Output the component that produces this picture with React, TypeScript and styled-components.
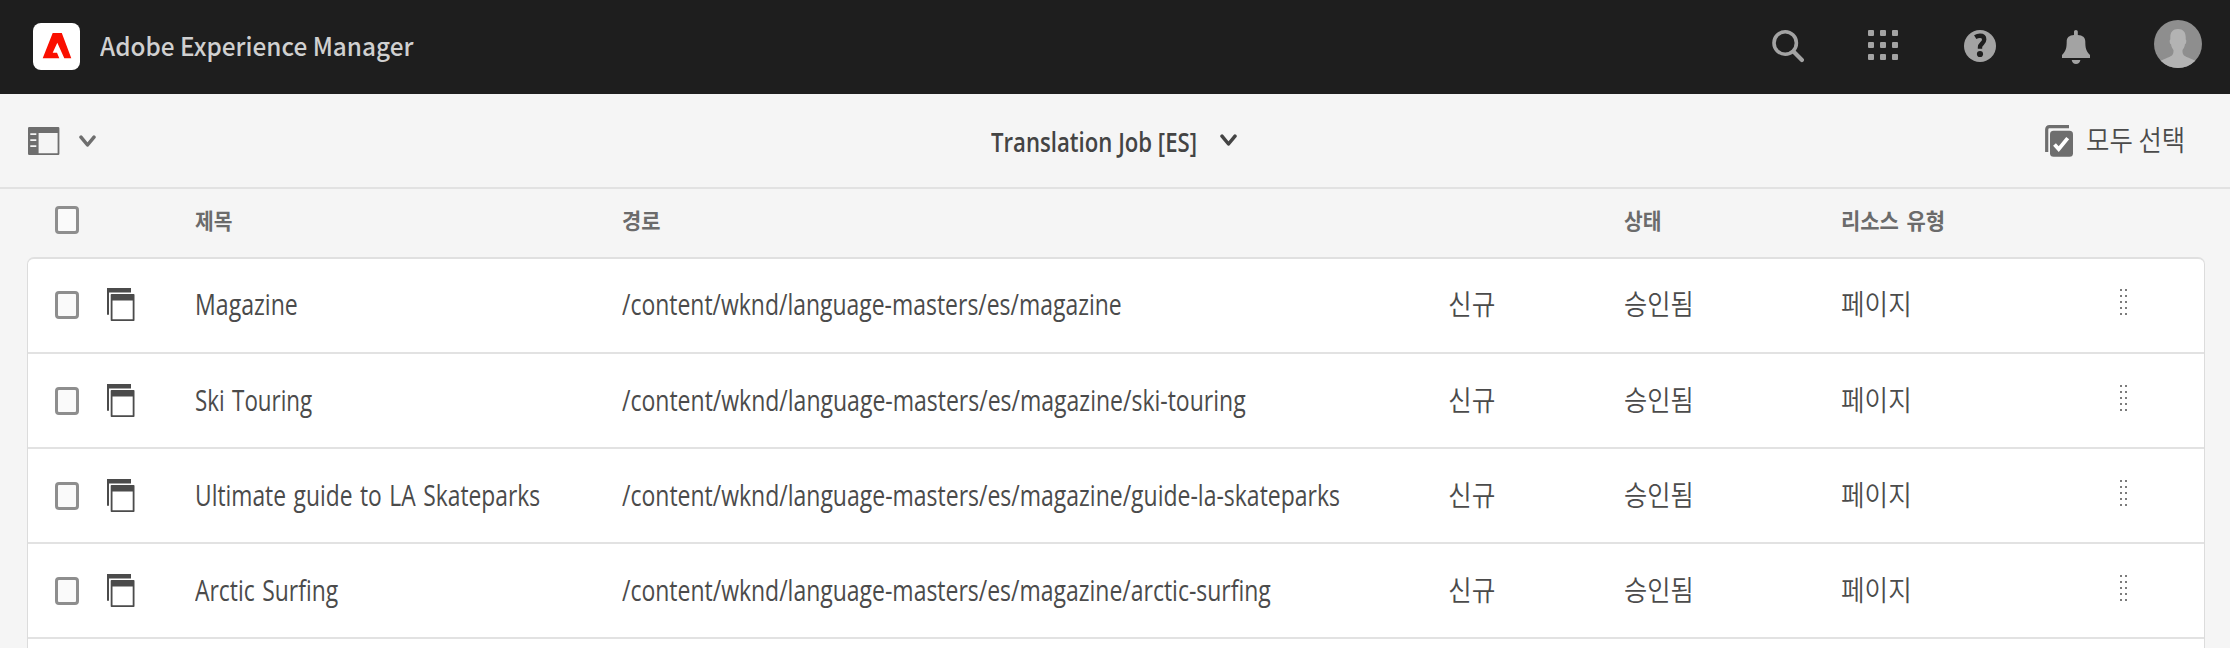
import React, { useLayoutEffect, useRef, useState } from "react";
import styled, { createGlobalStyle } from "styled-components";

const GlobalStyle = createGlobalStyle`
  * { box-sizing: border-box; }
  body { margin: 0; background: #f5f5f5; overflow: hidden; }
`;

const LATIN = `"Open Sans", "Noto Sans CJK KR", sans-serif`;
const KOREAN = `"Noto Sans CJK KR", "Noto Sans", sans-serif`;

const Page = styled.div`
  height: 648px;
  overflow: hidden;
  background: #f5f5f5;
  font-family: ${LATIN};
  color: #4b4b4b;
`;

/* Condensed text: the line is squeezed horizontally to a fixed measure. */
const Measure = styled.span<{ $width: number }>`
  display: block;
  flex: none;
  width: ${(p) => p.$width}px;
  white-space: nowrap;
`;

const Glyphs = styled.span`
  display: inline-block;
  transform-origin: 0 50%;
`;

function Condensed({ width, children }: { width: number; children: string }) {
  const ref = useRef<HTMLSpanElement>(null);
  const [scale, setScale] = useState(1);
  useLayoutEffect(() => {
    if (ref.current) setScale(width / ref.current.offsetWidth);
  }, [width, children]);
  return (
    <Measure $width={width}>
      <Glyphs ref={ref} style={{ transform: `scaleX(${scale})` }}>
        {children}
      </Glyphs>
    </Measure>
  );
}

const Shell = styled.header`
  display: flex;
  align-items: center;
  height: 94px;
  padding: 0 28px 0 33px;
  background: #1e1e1e;
`;

const Logo = styled.svg`
  width: 47px;
  height: 47px;
  margin-bottom: 1px;
`;

const Product = styled.div`
  margin-left: 20px;
  padding-bottom: 5px;
  font-family: "Noto Sans CJK KR", sans-serif;
  font-size: 25.5px;
  font-weight: 500;
  line-height: 40px;
  color: #d0d0d0;
`;

const ShellActions = styled.nav`
  display: flex;
  align-items: center;
  gap: 64px;
  margin-left: auto;
`;

const ShellIcon = styled.svg`
  width: 32px;
  height: 36px;
  color: #a3a3a3;
`;

const Avatar = styled.svg`
  width: 48px;
  height: 48px;
  margin: 0 0 6px -2px;
`;

const Toolbar = styled.div`
  display: grid;
  grid-template-columns: 1fr auto 1fr;
  align-items: center;
  height: 95px;
  padding: 0 45px 0 28px;
  border-bottom: 2px solid #e2e2e2;
`;

const RailToggle = styled.div`
  display: flex;
  align-items: center;
  gap: 19px;
  padding-top: 1px;
`;

const JobTitle = styled.div`
  display: flex;
  align-items: center;
  gap: 23px;
  padding-left: 14px;
  font-size: 27px;
  font-weight: 600;
  line-height: 40px;
  color: #444;
`;

const TitleText = styled.div`
  padding-top: 3px;
`;

const SelectAll = styled.div`
  display: flex;
  align-items: center;
  justify-self: end;
  gap: 13px;
  font-family: ${KOREAN};
  font-size: 28px;
  font-weight: 350;
  line-height: 40px;
`;

const SelectAllLabel = styled.div`
  padding-bottom: 4px;
`;

const Chevron = styled.svg<{ $tone: string }>`
  width: 17px;
  height: 13px;
  color: ${(p) => p.$tone};
`;

const columns = `52px 88px 427px 826px 176px 217px 278px 1fr`;

const ColumnHeader = styled.div`
  display: grid;
  grid-template-columns: ${columns};
  align-items: center;
  height: 68px;
  padding: 0 0 6px 55px;
  font-family: ${KOREAN};
  font-size: 22px;
  font-weight: 700;
  line-height: 30px;
  word-spacing: 3px;
  color: #6b6b6b;
`;

const HeaderLabel = styled.div`
  padding-bottom: 3px;
`;

const Card = styled.div`
  width: 2178px;
  margin-left: 27px;
  background: #fff;
  border: 1px solid #dcdcdc;
  border-top: 2px solid #e0e0e0;
  border-radius: 7px 7px 0 0;
`;

const Row = styled.div`
  display: grid;
  grid-template-columns: ${columns};
  align-items: center;
  height: 95px;
  padding-left: 27px;
  border-bottom: 2px solid #e2e2e2;

  &:first-child {
    padding-bottom: 2px;
  }
`;

const Checkbox = styled.span`
  display: block;
  width: 24px;
  height: 28px;
  border: 3px solid #8e8e8e;
  border-radius: 4px;
  background: #fafafa;
`;

const PageIcon = styled.svg`
  display: block;
  width: 28px;
  height: 34px;
  color: #4b4b4b;
`;

const Text = styled.div`
  padding-bottom: 1px;
  font-size: 28.5px;
  line-height: 40px;
  word-spacing: 2px;
`;

const KoreanText = styled.div`
  padding-bottom: 3px;
  font-family: ${KOREAN};
  font-size: 28.5px;
  font-weight: 350;
  line-height: 40px;
`;

const DragHandle = styled.svg`
  display: block;
  width: 9px;
  height: 26px;
  margin-bottom: 6px;
  color: #7c7c7c;
`;

function ChevronDown({ tone }: { tone: string }) {
  return (
    <Chevron $tone={tone} viewBox="0 0 17 13">
      <path d="M2 2.2 8.5 10l6.5-7.8" fill="none" stroke="currentColor" strokeWidth="3.5" strokeLinecap="round" strokeLinejoin="round" />
    </Chevron>
  );
}

const rows = [
  { title: "Magazine", titleWidth: 103, path: "/content/wknd/language-masters/es/magazine", pathWidth: 500 },
  { title: "Ski Touring", titleWidth: 117, path: "/content/wknd/language-masters/es/magazine/ski-touring", pathWidth: 624 },
  { title: "Ultimate guide to LA Skateparks", titleWidth: 345, path: "/content/wknd/language-masters/es/magazine/guide-la-skateparks", pathWidth: 718 },
  { title: "Arctic Surfing", titleWidth: 143, path: "/content/wknd/language-masters/es/magazine/arctic-surfing", pathWidth: 649 },
];

function PageGlyph() {
  return (
    <PageIcon viewBox="0 0 28 34">
      <path d="M0 0h24v4.6H2v22.2H0z" fill="currentColor" />
      <path d="M4.5 6h22.2q.8 0 .8.8v25.4q0 .8-.8.8H4.5q-.8 0-.8-.8V6.8q0-.8.8-.8zM5.5 12.4v18.9h20.2V12.4z" fill="currentColor" fillRule="evenodd" />
    </PageIcon>
  );
}

function Handle() {
  return (
    <DragHandle viewBox="0 0 9 26">
      {[0, 1, 2, 3, 4].map((i) => (
        <path key={i} d={`M1 ${i * 6}h2v2h-2zM6 ${i * 6}h2v2h-2z`} fill="currentColor" />
      ))}
    </DragHandle>
  );
}

export default function App() {
  return (
    <Page>
      <GlobalStyle />
      <Shell>
        <Logo viewBox="0 0 47 47">
          <rect width="47" height="47" rx="8" fill="#fff" />
          <path d="M9.7 35.3 19.7 10h9.1l9.5 25.3h-7L24.3 19.7l-4.6 10H24l2.3 5.6z" fill="#fa0f00" />
        </Logo>
        <Product>
          <Condensed width={313}>Adobe Experience Manager</Condensed>
        </Product>
        <ShellActions>
          <ShellIcon viewBox="0 0 32 36">
            <circle cx="13.2" cy="14" r="11.2" fill="none" stroke="currentColor" strokeWidth="3.6" />
            <path d="m21.5 22.5 8.4 8.4" stroke="currentColor" strokeWidth="4.2" strokeLinecap="round" />
          </ShellIcon>
          <ShellIcon viewBox="0 0 32 36">
            {[1, 13, 25].map((y) => [0, 12, 24].map((x) => <rect key={`${x}-${y}`} x={x} y={y} width="6" height="6" rx="1" fill="currentColor" />))}
          </ShellIcon>
          <ShellIcon viewBox="0 0 32 36">
            <circle cx="16" cy="17" r="16" fill="currentColor" />
            <path d="M11.2 8.2q2.300-1.400 4.700-1.400 4.300 0 4.300 3.600 0 2-2 4-2.200 2.200-2.200 3.800v1.600" fill="none" stroke="#1e1e1e" strokeWidth="4.4" />
            <circle cx="16" cy="25" r="3.100" fill="#1e1e1e" />
          </ShellIcon>
          <ShellIcon viewBox="0 0 32 36">
            <path d="M14 6V2.5Q14 1 15.900 1t1.900 1.500V6c5 .3 7.400 2.500 7.500 6.500.1 6.500.5 9 4.700 13.500V29H2v-3c4.200-4.500 4.600-7 4.700-13.500C6.800 8.500 9.200 6.300 14 6z" fill="currentColor" />
            <path d="M11.7 31h8.700q-.8 4-4.400 4t-4.300-4z" fill="currentColor" />
          </ShellIcon>
          <Avatar viewBox="0 0 48 48">
            <clipPath id="avatar">
              <circle cx="24" cy="24" r="24" />
            </clipPath>
            <g clipPath="url(#avatar)">
              <rect width="48" height="48" fill="#8e8e8e" />
              <path d="M24 9c5 0 7.700 3 7.700 8v2.500c1 .2.700 4.500-.7 4.800-.4 3-1.600 4.700-2.500 5.800-.2 4.700 1.500 6 5.500 7.500l8 3.400V48H6v-7l8-3.400c4-1.500 5.700-2.800 5.500-7.500-.9-1.100-2.100-2.800-2.500-5.800-1.400-.3-1.700-4.600-.7-4.800V17c0-5 2.700-8 7.700-8z" fill="#b3b3b3" />
            </g>
          </Avatar>
        </ShellActions>
      </Shell>

      <Toolbar>
        <RailToggle>
          <svg width="32" height="29" viewBox="0 0 32 29">
            <path d="M1.2 0h29q1.200 0 1.200 1.200v25.600q0 1.200-1.200 1.200h-29Q0 28 0 26.800V1.200Q0 0 1.200 0zM10.600 6v20.300h19V6z" fill="#6e6e6e" fillRule="evenodd" />
            <path d="M2.300 6.200h6v1.800h-6zM2.300 12.200h6v1.800h-6zM2.300 18.200h6v1.800h-6z" fill="#f5f5f5" />
          </svg>
          <ChevronDown tone="#6e6e6e" />
        </RailToggle>
        <JobTitle>
          <TitleText>
            <Condensed width={206}>Translation Job [ES]</Condensed>
          </TitleText>
          <ChevronDown tone="#444" />
        </JobTitle>
        <SelectAll>
          <svg width="28" height="32" viewBox="0 0 28 32">
            <path d="M1.700 27V4.500q0-2.800 2.800-2.800H24" fill="none" stroke="#6e6e6e" strokeWidth="3.200" />
            <rect x="4" y="4.700" width="24" height="27" rx="4" fill="#f5f5f5" />
            <rect x="5" y="5.700" width="23" height="26" rx="3.500" fill="#6e6e6e" />
            <path d="m9.500 19.500 4.200 4.600 9-11" fill="none" stroke="#fff" strokeWidth="3.800" />
          </svg>
          <SelectAllLabel>
            <Condensed width={99}>모두 선택</Condensed>
          </SelectAllLabel>
        </SelectAll>
      </Toolbar>

      <ColumnHeader>
        <Checkbox />
        <span />
        <HeaderLabel><Condensed width={37}>제목</Condensed></HeaderLabel>
        <HeaderLabel><Condensed width={38}>경로</Condensed></HeaderLabel>
        <span />
        <HeaderLabel><Condensed width={37}>상태</Condensed></HeaderLabel>
        <HeaderLabel><Condensed width={104}>리소스 유형</Condensed></HeaderLabel>
      </ColumnHeader>

      <Card>
        {rows.map((row) => (
          <Row key={row.path}>
            <Checkbox />
            <PageGlyph />
            <Text><Condensed width={row.titleWidth}>{row.title}</Condensed></Text>
            <Text><Condensed width={row.pathWidth}>{row.path}</Condensed></Text>
            <KoreanText><Condensed width={47}>신규</Condensed></KoreanText>
            <KoreanText><Condensed width={70}>승인됨</Condensed></KoreanText>
            <KoreanText><Condensed width={71}>페이지</Condensed></KoreanText>
            <Handle />
          </Row>
        ))}
        <Row />
      </Card>
    </Page>
  );
}
